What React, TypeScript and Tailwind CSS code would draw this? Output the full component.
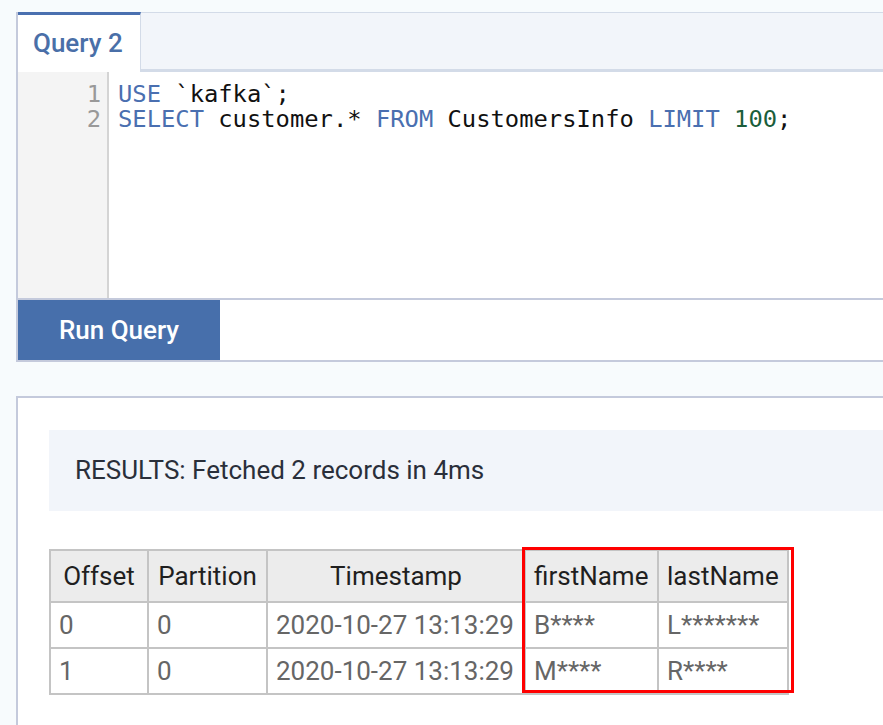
const rows = [
  { offset: "0", partition: "0", ts: "2020-10-27 13:13:29", first: "B****", last: "L*******" },
  { offset: "1", partition: "0", ts: "2020-10-27 13:13:29", first: "M****", last: "R****" },
]

const ui = "font-['Roboto','Liberation_Sans',sans-serif]"
const mono = "font-['DejaVu_Sans_Mono','Liberation_Mono',monospace]"

function Editor() {
  return (
    <div className={`flex h-[226px] ${mono} text-[23.8px] leading-[25px]`}>
      <div className="w-[91px] shrink-0 bg-[#f4f4f4] border-r-2 border-[#d4d4d4] pt-[10px] pr-[6px] text-right text-[#999999]">
        <div>1</div>
        <div>2</div>
      </div>
      <div className="flex-1 bg-white pt-[10px] pl-[9px] text-[#111111] whitespace-pre">
        <div>
          <span className="text-[#4a6fb0]">USE</span> `kafka`;
        </div>
        <div>
          <span className="text-[#4a6fb0]">SELECT</span> customer.*{" "}
          <span className="text-[#4a6fb0]">FROM</span> CustomersInfo{" "}
          <span className="text-[#4a6fb0]">LIMIT</span>{" "}
          <span className="text-[#1b5e3b]">100</span>;
        </div>
      </div>
    </div>
  )
}

function QueryPanel() {
  return (
    <div className="w-[900px] border-l-2 border-[#c4cadc]">
      {/* tab strip */}
      <div className="flex h-[60px]">
        <div className="w-[123px] bg-white border-t-[3px] border-[#4a70b0] border-r border-r-[#d3dbe8] pl-[15px] pt-[9px] text-[26px] font-medium text-[#4a6fa8]">
          Query 2
        </div>
        <div className="flex-1 bg-[#f2f5fa] border-t border-[#d3dbe8] border-b-[3px] border-b-[#d3dbe8]" />
      </div>
      <Editor />
      <div className="flex h-[64px] bg-white border-t-2 border-b-2 border-[#c4cadc]">
        <button className="w-[202px] bg-[#476fab] text-white text-[26px] font-medium">
          Run Query
        </button>
      </div>
    </div>
  )
}

function ResultsTable() {
  const th = "border-2 border-[#c4c4c4] px-[8px] font-normal text-[#1f1f1f] text-center"
  const td = "border-2 border-[#c4c4c4] px-[8px] text-left text-[#666666]"
  return (
    <div className="relative mt-[38px] w-fit">
      <table className="border-collapse text-[26px]">
        <thead>
          <tr className="h-[52px] bg-[#ececec]">
            <th className={`${th} w-[98px]`}>Offset</th>
            <th className={`${th} w-[119px]`}>Partition</th>
            <th className={`${th} w-[258px]`}>Timestamp</th>
            <th className={`${th} w-[133px] text-left`}>firstName</th>
            <th className={`${th} w-[130px] text-left`}>lastName</th>
          </tr>
        </thead>
        <tbody>
          {rows.map((r) => (
            <tr key={r.offset} className="h-[46px] bg-white">
              <td className={td}>{r.offset}</td>
              <td className={td}>{r.partition}</td>
              <td className={td}>{r.ts}</td>
              <td className={td}>{r.first}</td>
              <td className={td}>{r.last}</td>
            </tr>
          ))}
        </tbody>
      </table>
      {/* highlight annotation */}
      <div className="absolute left-[473px] top-[-2px] w-[272px] h-[146px] border-[3px] border-[#ff0000] pointer-events-none" />
    </div>
  )
}

export default function App() {
  return (
    <div className={`h-[725px] overflow-hidden bg-[#f7fbfd] pt-[12px] pl-[16px] ${ui}`}>
      <QueryPanel />
      <div className="mt-[34px] w-[900px] h-[400px] bg-white border-t-2 border-l-2 border-[#c4cadc] pl-[31px] pt-[32px]">
        <div className="h-[81px] bg-[#f2f5fa] pl-[26px] flex items-center text-[26px] text-[#2a2f3a]">
          RESULTS: Fetched 2 records in 4ms
        </div>
        <ResultsTable />
      </div>
    </div>
  )
}
